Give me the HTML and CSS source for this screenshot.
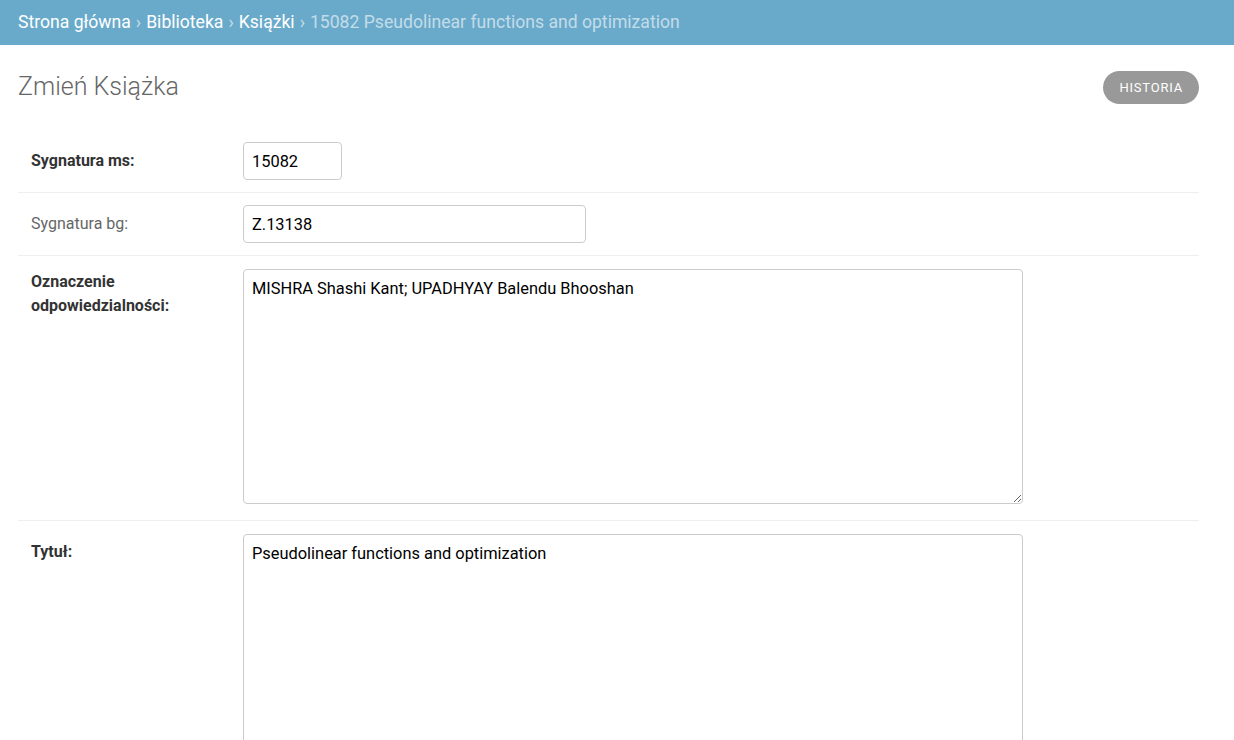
FILE: index.html
```html
<!DOCTYPE html>
<html lang="pl">
<head>
<meta charset="utf-8">
<title>Zmień Książka</title>
<link rel="stylesheet" href="styles.css">
</head>
<body>
<div class="breadcrumbs">
  <a href="#">Strona główna</a><span class="sep">›</span><a href="#">Biblioteka</a><span class="sep">›</span><a href="#">Książki</a><span class="sep">›</span><span class="current">15082 Pseudolinear functions and optimization</span>
</div>
<div class="content">
  <div class="header">
    <h1>Zmień Książka</h1>
    <a class="history" href="#">Historia</a>
  </div>
  <div class="form">
    <div class="row">
      <label class="required">Sygnatura ms:</label>
      <input class="field int" type="text" value="15082">
    </div>
    <div class="row">
      <label>Sygnatura bg:</label>
      <input class="field text" type="text" value="Z.13138">
    </div>
    <div class="row">
      <label class="required wrap">Oznaczenie odpowiedzialności:</label>
      <textarea class="field area">MISHRA Shashi Kant; UPADHYAY Balendu Bhooshan</textarea>
    </div>
    <div class="row">
      <label class="required">Tytuł:</label>
      <textarea class="field area">Pseudolinear functions and optimization</textarea>
    </div>
  </div>
</div>
</body>
</html>
```

FILE: styles.css
```css
html, body {
  margin: 0;
  padding: 0;
  background: #fff;
  font-family: Roboto, "Liberation Sans", sans-serif;
  color: #333;
}
.breadcrumbs {
  background: #69aacb;
  height: 45px;
  box-sizing: border-box;
  padding: 11px 18px 0;
  font-size: 17.6px;
  line-height: 22px;
  color: #c4dce8;
}
.breadcrumbs a {
  color: #fff;
  text-decoration: none;
}
.breadcrumbs .sep {
  color: #c4dce8;
  margin: 0 5px;
}
.breadcrumbs .current {
  color: #c4dce8;
}
.content {
  padding: 0 35px 0 18px;
}
.header {
  display: flex;
  justify-content: space-between;
  align-items: center;
  padding-top: 25px;
  padding-bottom: 26px;
}
h1 {
  margin: 0;
  font-size: 25px;
  font-weight: 300;
  color: #666;
  line-height: 34px;
}
.history {
  display: inline-block;
  background: #999;
  color: #fff;
  text-decoration: none;
  text-transform: uppercase;
  font-size: 13px;
  letter-spacing: 0.8px;
  border-radius: 17px;
  padding: 0 16px;
  height: 33px;
  line-height: 33px;
}
.row {
  display: flex;
  align-items: flex-start;
  padding: 12px 0;
  border-bottom: 1px solid #eee;
}
.row label {
  width: 212px;
  flex: none;
  padding: 7px 0 0 13px;
  font-size: 16px;
  line-height: 24px;
  color: #666;
}
.row label.required {
  font-weight: bold;
  color: #333;
}
.row label.wrap {
  padding-top: 2px;
}
.field {
  box-sizing: border-box;
  border: 1px solid #ccc;
  border-radius: 4px;
  font-family: Roboto, "Liberation Sans", sans-serif;
  font-size: 16.4px;
  color: #000;
  padding: 8px 8px;
  margin: 0;
  background: #fff;
}
.int {
  width: 99px;
  height: 38px;
}
.text {
  width: 343px;
  height: 38px;
}
.area {
  width: 780px;
  height: 235px;
  line-height: 20px;
  padding: 9px 8px 8px;
  margin: 1px 0 4px;
  resize: vertical;
  display: block;
}
```
